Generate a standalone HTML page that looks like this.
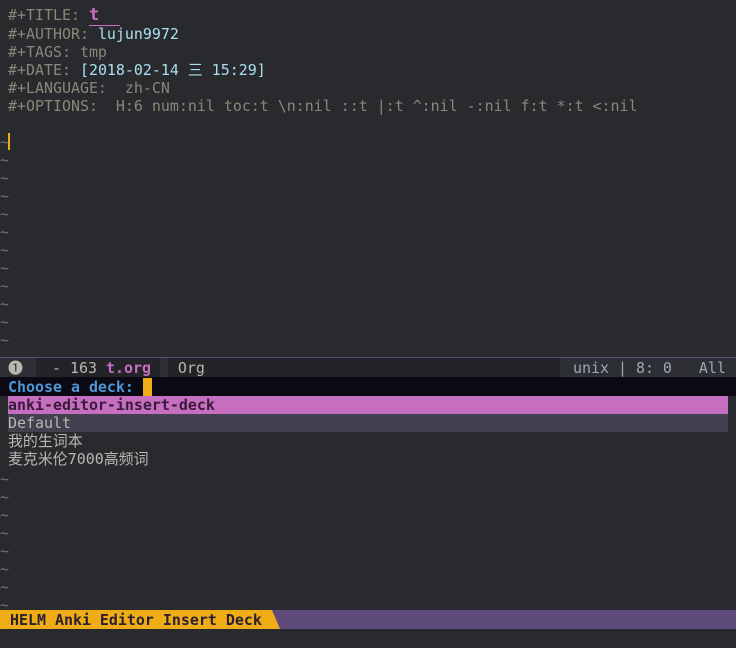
<!DOCTYPE html>
<html><head><style>
body{margin:0;width:736px;height:648px;background:#292a2e;overflow:hidden;font-family:"DejaVu Sans Mono","Liberation Mono","Noto Sans CJK SC",monospace;font-size:14.95px;color:#b8b8b0}
.l{position:absolute;left:0;width:736px;height:18px;line-height:18px;white-space:pre;padding-left:8px;box-sizing:border-box}
.k{color:#8a8678}.v{color:#a8e0f0}
.t{position:absolute;left:0;color:#707076;line-height:18px;height:18px}
</style></head><body>
<div class="l" style="top:6px"><span class="k">#+TITLE: </span><span style="color:#c66ec0;font-weight:bold;font-size:17px;border-bottom:1px solid #c66ec0">t  </span></div>
<div class="l" style="top:25px"><span class="k">#+AUTHOR: </span><span class="v">lujun9972</span></div>
<div class="l" style="top:43px"><span class="k">#+TAGS: tmp</span></div>
<div class="l" style="top:61px"><span class="k">#+DATE: </span><span class="v">[2018-02-14 三 15:29]</span></div>
<div class="l" style="top:79px"><span class="k">#+LANGUAGE:  zh-CN</span></div>
<div class="l" style="top:97px"><span class="k">#+OPTIONS:  H:6 num:nil toc:t \n:nil ::t |:t ^:nil -:nil f:t *:t &lt;:nil</span></div>
<div style="position:absolute;left:8px;top:133px;width:2px;height:17px;background:#f0ac14"></div>
<div class="t" style="top:133px">~<br>~<br>~<br>~<br>~<br>~<br>~<br>~<br>~<br>~<br>~<br>~</div>
<div style="position:absolute;top:357px;left:0;width:736px;height:1px;background:#5e4b7c"></div>
<div style="position:absolute;top:358px;left:0;width:736px;height:19px;background:#232428"></div>
<div style="position:absolute;top:358px;left:0;width:36px;height:19px;background:#2e2f34"></div>
<div style="position:absolute;top:358px;left:160px;width:8px;height:19px;background:#2e2f34"></div>
<div style="position:absolute;top:358px;left:560px;width:176px;height:19px;background:#2e2f34"></div>
<div class="l" style="top:359px;color:#b8b8b0;padding-left:8px">❶</div>
<div class="l" style="top:359px;color:#b8b8b0;padding-left:52px">- 163 <span style="color:#c66ec0;font-weight:bold">t.org</span>   Org</div>
<div class="l" style="top:359px;padding-left:573px;color:#9aa8b8">unix | 8: 0   All</div>
<div style="position:absolute;top:377px;left:0;width:736px;height:19px;background:#0a0914"></div>
<div class="l" style="top:378px;color:#4f97d7;font-weight:bold">Choose a deck: <span style="background:#f0ac14"> </span></div>
<div style="position:absolute;top:396px;left:8px;width:720px;height:18px;background:#c66ec0"></div>
<div class="l" style="top:396px;color:#3a1a3a;font-weight:bold">anki-editor-insert-deck</div>
<div style="position:absolute;top:414px;left:8px;width:720px;height:18px;background:#43404f"></div>
<div class="l" style="top:414px">Default</div>
<div class="l" style="top:432px">我的生词本</div>
<div class="l" style="top:450px">麦克米伦7000高频词</div>
<div class="t" style="top:470px">~<br>~<br>~<br>~<br>~<br>~<br>~<br>~</div>
<div style="position:absolute;top:610px;left:0;width:736px;height:19px;background:#5e4b7c"></div>
<svg style="position:absolute;top:610px;left:0" width="285" height="19"><path d="M0 0H272L280 19H0Z" fill="#f0ac14"/></svg>
<div class="l" style="top:611px;color:#2a2030;font-weight:bold;padding-left:10px">HELM Anki Editor Insert Deck</div>
</body></html>
